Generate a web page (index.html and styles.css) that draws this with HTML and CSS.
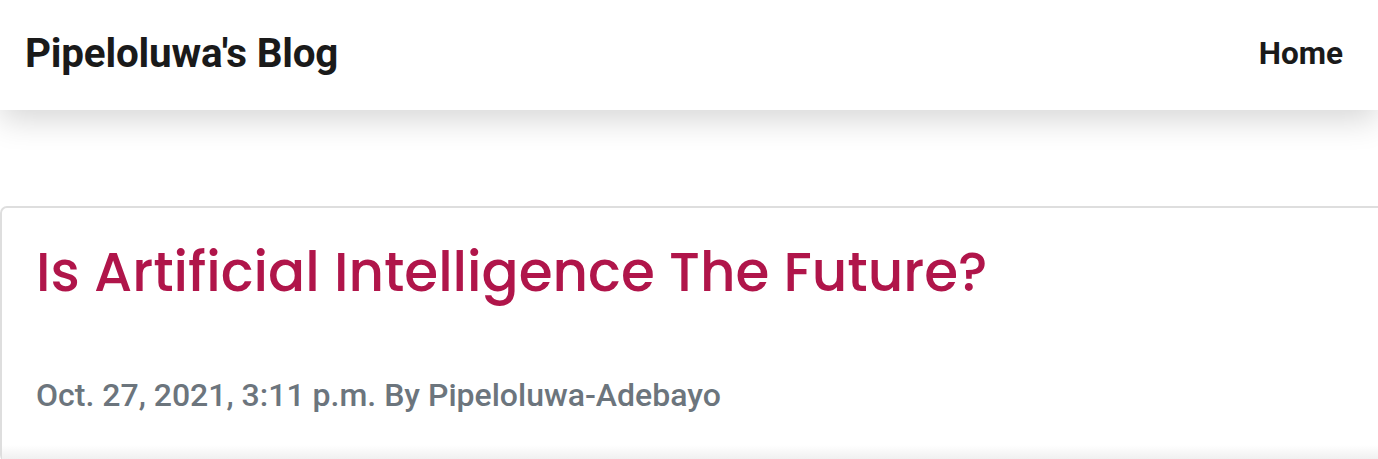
FILE: index.html
```html
<!DOCTYPE html>
<html lang="en">
<head>
<meta charset="utf-8">
<title>Pipeloluwa's Blog</title>
<link rel="stylesheet" href="styles.css">
</head>
<body>
<header class="navbar">
  <a class="brand" href="#">Pipeloluwa's Blog</a>
  <nav class="nav"><a class="nav-link" href="#">Home</a></nav>
</header>
<main class="content">
  <article class="card">
    <h1 class="post-title">Is Artificial Intelligence The Future?</h1>
    <p class="post-meta">Oct. 27, 2021, 3:11 p.m. By Pipeloluwa-Adebayo</p>
    <div class="card-fade"></div>
  </article>
</main>
</body>
</html>
```
FILE: styles.css
```css
html, body {
  margin: 0;
  padding: 0;
  background: #ffffff;
  overflow: hidden;
}
body {
  font-family: Roboto, "Liberation Sans", Arial, sans-serif;
  color: #1a1a1a;
}
a { text-decoration: none; color: inherit; }

.navbar {
  position: relative;
  z-index: 2;
  height: 110px;
  box-sizing: border-box;
  padding: 0 35px 4px 25px;
  display: flex;
  align-items: center;
  justify-content: space-between;
  background: #ffffff;
  box-shadow: 0 10px 30px rgba(0, 0, 0, 0.16);
}
.brand {
  font-size: 40.4px;
  font-weight: 700;
  color: #1a1a1a;
  letter-spacing: -0.2px;
}
.nav-link {
  font-size: 31.5px;
  font-weight: 700;
  color: #1a1a1a;
}

.content {
  padding-top: 96px;
}
.card {
  margin-right: -20px;
  border: 2px solid #dedede;
  border-radius: 7px;
  padding: 0 34px;
  background: #fff;
}
.post-title {
  margin: 0;
  padding-top: 24px;
  font-family: Poppins, Lato, "Open Sans", sans-serif;
  font-weight: 500;
  font-size: 54.8px;
  line-height: 80px;
  color: #b0154a;
}
.post-meta {
  margin: 0;
  padding-top: 63px;
  font-size: 32px;
  font-weight: 500;
  line-height: 40px;
  color: #6c757d;
}
.card-fade {
  height: 45px;
  margin: 0 -34px;
  background: linear-gradient(to bottom, #ffffff 0, #ffffff 30px, #efefef 45px);
}
```
